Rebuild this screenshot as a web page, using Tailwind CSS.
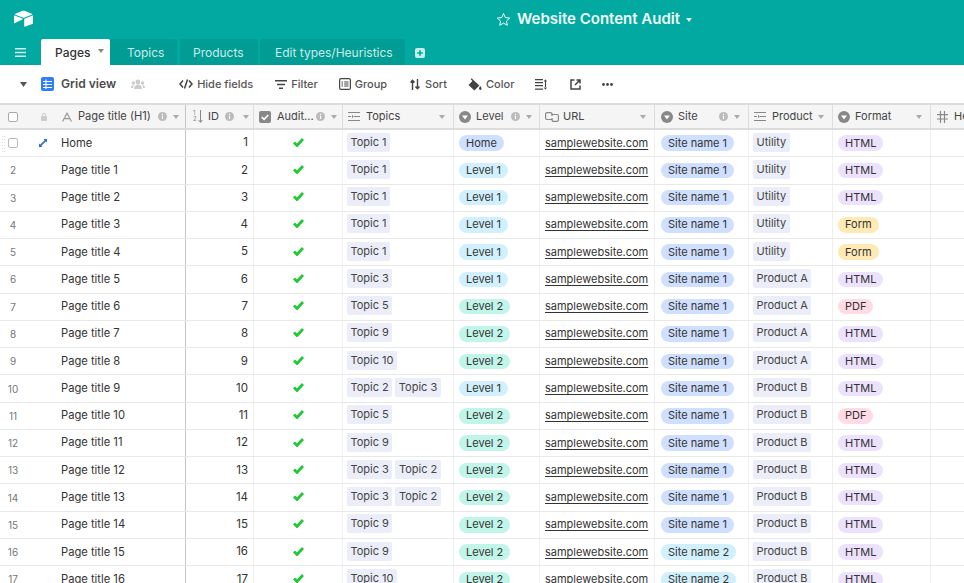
<!doctype html>
<html lang="en">
<head>
<meta charset="utf-8">
<title>Website Content Audit</title>
<script src="https://cdn.jsdelivr.net/npm/@tailwindcss/browser@4"></script>
</head>
<body class="w-[964px] h-[583px] overflow-hidden bg-white font-['Inter','Noto_Sans',sans-serif] text-[#333] antialiased">
<header class="h-[65px] bg-[#01a9a0] flex flex-col">
  <div class="h-[39px] flex items-center text-white relative">
    <svg class="ml-[14px] w-[19px] h-[17px] -mt-[2px]" viewBox="0 0 200 170" fill="#fff"><path d="M90 4.4L14.2 35.7c-4.2 1.7-4.2 7.7.1 9.4l76.1 30.2c6.7 2.7 14.1 2.7 20.8 0l76.1-30.2c4.2-1.7 4.3-7.7.1-9.4L111.6 4.4c-6.9-2.9-14.7-2.9-21.6 0"/><path d="M107.5 91.8v75.4c0 3.6 3.6 6 6.9 4.7l84.8-32.9c1.9-.8 3.2-2.6 3.2-4.7V58.9c0-3.6-3.6-6-6.9-4.7l-84.8 32.9c-2 .8-3.2 2.6-3.2 4.7"/><path d="M87.7 95.7L62.5 107.9l-2.6 1.2L6.8 134.6c-3.4 1.6-7.7-.8-7.7-4.6V59.3c0-1.4.7-2.6 1.7-3.5.4-.4.9-.7 1.3-1 1.3-.8 3.2-1 4.8-.4l80.4 31.9c4.1 1.6 4.4 7.4.4 9.4"/></svg>
    <svg class="ml-[463px] w-[15px] h-[15px]" viewBox="0 0 24 24" fill="none" stroke="#fff" stroke-width="1.5" stroke-linejoin="round"><path d="M12 2.5l2.9 6.4 7 .8-5.2 4.7 1.4 6.9-6.1-3.5-6.1 3.5 1.4-6.9-5.2-4.7 7-.8z"/></svg>
    <span class="ml-[6px] text-[15px] font-semibold text-[#effaf9]">Website Content Audit</span>
    <svg class="ml-[6px] w-[6px] h-[4px]" viewBox="0 0 6 4" fill="#d8f3f1"><path d="M0 0h6L3 4z"/></svg>
  </div>
  <div class="h-[26px] flex items-stretch text-[12px]">
    <div class="w-[41px] flex items-center justify-center">
      <svg class="w-[11px] h-[9px]" viewBox="0 0 11 9" fill="#cdeeec"><path d="M0 0h11v1.6H0zM0 3.7h11v1.6H0zM0 7.4h11V9H0z"/></svg>
    </div>
    <div class="w-[69px] bg-white rounded-t-[2px] flex items-center pl-[14px] pt-[1px] text-[#333] font-medium">Pages
      <svg class="ml-[8px] -mt-[4px] w-[6px] h-[4px]" viewBox="0 0 6 4" fill="#888"><path d="M0 0h6L3 4z"/></svg>
    </div>
    <div class="w-[67px] bg-[#019c94] flex items-center pl-[17px] pt-[1px] text-[#c9ecea] rounded-t-[2px]">Topics</div>
    <div class="ml-[3px] w-[78px] bg-[#019c94] flex items-center pl-[13px] pt-[1px] text-[#c9ecea] rounded-t-[2px]">Products</div>
    <div class="ml-[2px] w-[145px] bg-[#019c94] flex items-center pl-[15px] pt-[1px] text-[#c9ecea] rounded-t-[2px]">Edit types/Heuristics</div>
    <div class="ml-[10px] flex items-center pt-[1px]">
      <svg class="w-[10px] h-[10px]" viewBox="0 0 10 10"><rect width="10" height="10" rx="2" fill="#c6efec"/><path d="M5 2.2v5.6M2.2 5h5.6" stroke="#01a9a0" stroke-width="1.6"/></svg>
    </div>
  </div>
</header>

<div class="h-[38px] flex items-center text-[11px] text-[#555] font-medium">
  <svg class="ml-[20px] w-[7px] h-[5px]" viewBox="0 0 7 5" fill="#555"><path d="M0 0h7L3.5 5z"/></svg>
  <svg class="ml-[14px] w-[13px] h-[14px]" viewBox="0 0 13 14"><rect width="13" height="14" rx="2" fill="#2d7ff9"/><path d="M2 4.500h9M2 7.500h9M2 10.500h9M5 2.500v9.500" stroke="#fff" stroke-width="1.1"/></svg>
  <span class="ml-[7px] text-[12.1px] font-semibold text-[#4d4d4d]">Grid view</span>
  <svg class="ml-[15px] w-[14px] h-[10px]" viewBox="0 0 14 10" fill="#ccc"><circle cx="7" cy="3" r="2.4"/><circle cx="2.4" cy="4" r="1.7"/><circle cx="11.6" cy="4" r="1.7"/><path d="M3 10c0-3 1.6-4.5 4-4.5S11 7 11 10zM0 9c0-2 1-3 2.6-3L2 9zM14 9c0-2-1-3-2.6-3l.6 3z"/></svg>
  <svg class="ml-[34px] w-[14px] h-[10px]" viewBox="0 0 14 10" fill="none" stroke="#444" stroke-width="1.5"><path d="M4 1.5L1 5l3 3.5M10 1.5L13 5l-3 3.5M8.500 .5L5.500 9.500"/></svg>
  <span class="ml-[4px]">Hide fields</span>
  <svg class="ml-[22px] w-[12px] h-[9px]" viewBox="0 0 12 9" fill="#444"><path d="M0 0h12v1.6H0zM2 3.7h8v1.6H2zM4 7.4h4V9H4z"/></svg>
  <span class="ml-[4px]">Filter</span>
  <svg class="ml-[21px] w-[12px] h-[12px]" viewBox="0 0 12 12" fill="none" stroke="#444" stroke-width="1.2"><rect x=".6" y=".6" width="10.8" height="10.8" rx="1.5"/><path d="M2.500 4h1.500M5.200 4h4.300M2.500 6h1.500M5.200 6h4.300M2.500 8h1.500M5.200 8h4.300"/></svg>
  <span class="ml-[4px]">Group</span>
  <svg class="ml-[23px] w-[10px] h-[11px]" viewBox="0 0 10 11" fill="none" stroke="#444" stroke-width="1.4"><path d="M2.500 11V1.500M.5 3.500l2-2.300 2 2.300M7.500 0v9.500M5.500 7.500l2 2.300 2-2.300"/></svg>
  <span class="ml-[5px]">Sort</span>
  <svg class="ml-[21px] w-[14px] h-[13px]" viewBox="0 0 14 13" fill="#444"><path d="M2.700 1.300l1-1 1.700 1.700 6 5.500-5 5L.5 7l3.900-3.900z"/><path d="M12.300 8c.8 1.200 1.300 1.900 1.300 2.600a1.300 1.300 0 01-2.600 0c0-.7.5-1.400 1.300-2.600z"/></svg>
  <span class="ml-[4px]">Color</span>
  <svg class="ml-[21px] w-[12px] h-[11px]" viewBox="0 0 12 11" fill="#444"><path d="M0 0h8v1.300H0zM0 3h8v1.300H0zM0 6h8v1.300H0zM0 9.500h8v1.300H0zM10 2h1v7h-1zM8.700 2.500l1.800-2.300 1.500 2.300zM8.700 8.500l1.800 2.300L12 8.500z"/></svg>
  <svg class="ml-[23px] w-[11px] h-[11px]" viewBox="0 0 11 11" fill="none" stroke="#444" stroke-width="1.5"><path d="M4.500 1H1v9h9V6.500"/><path d="M5 6l4.500-4.500M6.500 1H10v3.500"/></svg>
  <svg class="ml-[21px] w-[11px] h-[3px]" viewBox="0 0 11 3" fill="#444"><circle cx="1.500" cy="1.500" r="1.400"/><circle cx="5.500" cy="1.500" r="1.400"/><circle cx="9.500" cy="1.500" r="1.400"/></svg>
</div>

<div class="text-[11px] leading-none">
  <div class="h-[27px] bg-[#f5f5f5] border-t-2 border-b-2 border-[#dcdcdc] grid grid-cols-[186px_68px_89px_111px_86px_115px_94px_84px_98px_33px] text-[#444] [&>div]:border-r [&>div]:border-[#dedede] [&>div]:flex [&>div]:items-center">
    <div class="!border-[#c4c4c4] pl-[8px]">
      <span class="w-[10px] h-[10px] rounded-[2px] border border-[#aaa] bg-white"></span>
      <svg class="ml-[23px] w-[6px] h-[8px]" viewBox="0 0 6 8" fill="#ccc"><rect y="3" width="6" height="5" rx="1"/><path d="M1.300 3.500V2a1.700 1.700 0 013.400 0v1.500" fill="none" stroke="#ccc"/></svg>
      <svg class="ml-[15px] w-[10px] h-[10px]" viewBox="0 0 11 10" fill="none" stroke="#999" stroke-width="1.300"><path d="M.6 10L5.500.8 10.400 10M2.200 6.800h6.600"/></svg>
      <span class="ml-[6px] whitespace-nowrap text-[11.1px]">Page title (H1)</span>
      <svg class="ml-[7px] w-[9px] h-[9px]" viewBox="0 0 9 9"><circle cx="4.500" cy="4.500" r="4.500" fill="#bbb"/><path d="M4.500 3.700v3.200M4.500 1.700v1.200" stroke="#fff" stroke-width="1.200"/></svg>
      <svg class="ml-[6px] w-[6px] h-[4px]" viewBox="0 0 6 4" fill="#aaa"><path d="M0 0h6L3 4z"/></svg>
    </div>
    <div class="pl-[7px]">
      <span class="w-[5px] h-[14px] text-[6px] leading-[6.500px] text-[#888] flex flex-col"><span>1</span><span>2</span></span>
      <svg class="w-[5px] h-[13px]" viewBox="0 0 5 13" fill="none" stroke="#888" stroke-width="1"><path d="M2.500 0v12M.5 10l2 2.400 2-2.400"/></svg>
      <span class="ml-[5px]">ID</span>
      <svg class="ml-[6px] w-[9px] h-[9px]" viewBox="0 0 9 9"><circle cx="4.500" cy="4.500" r="4.500" fill="#bbb"/><path d="M4.500 3.700v3.200M4.500 1.700v1.200" stroke="#fff" stroke-width="1.200"/></svg>
      <svg class="ml-[9px] w-[6px] h-[4px]" viewBox="0 0 6 4" fill="#aaa"><path d="M0 0h6L3 4z"/></svg>
    </div>
    <div class="pl-[5px]">
      <svg class="w-[12px] h-[12px]" viewBox="0 0 12 12"><rect width="12" height="12" rx="2" fill="#888"/><path d="M2.800 6.200l2.300 2.200 4.200-4.400" fill="none" stroke="#fff" stroke-width="1.600"/></svg>
      <span class="ml-[6px]">Audit...</span>
      <svg class="ml-[2px] w-[9px] h-[9px]" viewBox="0 0 9 9"><circle cx="4.500" cy="4.500" r="4.500" fill="#bbb"/><path d="M4.500 3.700v3.200M4.500 1.700v1.200" stroke="#fff" stroke-width="1.200"/></svg>
      <svg class="ml-[6px] w-[6px] h-[4px]" viewBox="0 0 6 4" fill="#aaa"><path d="M0 0h6L3 4z"/></svg>
    </div>
    <div class="pl-[5px]">
      <svg class="w-[12px] h-[9px]" viewBox="0 0 12 9" fill="#888"><path d="M0 0h12v1.100H0zM6 3.900h6V5H6zM0 3.900h3V5H0zM0 7.900h12V9H0zM4 2.800l1.800 1.700L4 6.200z"/></svg>
      <span class="ml-[6px]">Topics</span>
      <svg class="ml-auto mr-[8px] w-[6px] h-[4px]" viewBox="0 0 6 4" fill="#aaa"><path d="M0 0h6L3 4z"/></svg>
    </div>
    <div class="pl-[5px]">
      <svg class="w-[12px] h-[12px]" viewBox="0 0 12 12"><circle cx="6" cy="6" r="6" fill="#888"/><path d="M3 4.500h6L6 8.500z" fill="#fff"/></svg>
      <span class="ml-[5px]">Level</span>
      <svg class="ml-[8px] w-[9px] h-[9px]" viewBox="0 0 9 9"><circle cx="4.500" cy="4.500" r="4.500" fill="#bbb"/><path d="M4.500 3.700v3.200M4.500 1.700v1.200" stroke="#fff" stroke-width="1.200"/></svg>
      <svg class="ml-[6px] w-[6px] h-[4px]" viewBox="0 0 6 4" fill="#aaa"><path d="M0 0h6L3 4z"/></svg>
    </div>
    <div class="pl-[5px]">
      <svg class="w-[14px] h-[10px]" viewBox="0 0 14 10" fill="none" stroke="#888" stroke-width="1.200"><path d="M7.500 7.500H2a1.400 1.400 0 01-1.400-1.400V2A1.400 1.400 0 012 .6h3.500A1.400 1.400 0 017 2v2"/><path d="M6.500 2.500H12a1.400 1.400 0 011.400 1.400V8A1.400 1.400 0 0112 9.400H8.500A1.400 1.400 0 017 8V6"/></svg>
      <span class="ml-[4px]">URL</span>
      <svg class="ml-auto mr-[8px] w-[6px] h-[4px]" viewBox="0 0 6 4" fill="#aaa"><path d="M0 0h6L3 4z"/></svg>
    </div>
    <div class="pl-[6px]">
      <svg class="w-[12px] h-[12px]" viewBox="0 0 12 12"><circle cx="6" cy="6" r="6" fill="#888"/><path d="M3 4.500h6L6 8.500z" fill="#fff"/></svg>
      <span class="ml-[5px]">Site</span>
      <svg class="ml-auto w-[9px] h-[9px]" viewBox="0 0 9 9"><circle cx="4.500" cy="4.500" r="4.500" fill="#bbb"/><path d="M4.500 3.700v3.200M4.500 1.700v1.200" stroke="#fff" stroke-width="1.200"/></svg>
      <svg class="ml-[6px] mr-[8px] w-[6px] h-[4px]" viewBox="0 0 6 4" fill="#aaa"><path d="M0 0h6L3 4z"/></svg>
    </div>
    <div class="pl-[5px]">
      <svg class="w-[12px] h-[9px]" viewBox="0 0 12 9" fill="#888"><path d="M0 0h12v1.100H0zM6 3.900h6V5H6zM0 3.900h3V5H0zM0 7.900h12V9H0zM4 2.800l1.800 1.700L4 6.200z"/></svg>
      <span class="ml-[6px]">Product</span>
      <svg class="ml-auto mr-[8px] w-[6px] h-[4px]" viewBox="0 0 6 4" fill="#aaa"><path d="M0 0h6L3 4z"/></svg>
    </div>
    <div class="pl-[5px]">
      <svg class="w-[12px] h-[12px]" viewBox="0 0 12 12"><circle cx="6" cy="6" r="6" fill="#888"/><path d="M3 4.500h6L6 8.500z" fill="#fff"/></svg>
      <span class="ml-[5px]">Format</span>
      <svg class="ml-auto mr-[8px] w-[6px] h-[4px]" viewBox="0 0 6 4" fill="#aaa"><path d="M0 0h6L3 4z"/></svg>
    </div>
    <div class="pl-[6px] !border-r-0 overflow-hidden">
      <svg class="shrink-0 w-[11px] h-[12px]" viewBox="0 0 11 12" fill="none" stroke="#888" stroke-width="1.200"><path d="M3.500 0v12M7.500 0v12M0 3.700h11M0 8h11"/></svg>
      <span class="ml-[6px]">He</span>
    </div>
  </div>
  <div id="rows"></div>
</div>

<script>
const chip = "inline-flex items-center h-[19px] -mt-[2px] px-[3.5px] rounded-[2px] bg-[#ebeef8] text-[#444] whitespace-nowrap";
const pill = "inline-flex items-center h-[15.5px] px-[7px] rounded-full whitespace-nowrap text-[#333]";
const colors = {
  Home: "bg-[#cfdfff]", "Level 1": "bg-[#d0f0fd]", "Level 2": "bg-[#c2f5e9]",
  "Site name 1": "bg-[#cfdfff]", "Site name 2": "bg-[#d0f0fd]",
  HTML: "bg-[#ede2fe]", Form: "bg-[#ffeab6]", PDF: "bg-[#ffdce5]"
};
const U = "Utility", A = "Product A", B = "Product B";
const data = [
 ["Home",1,["Topic 1"],"Home","Site name 1",U,"HTML"],
 ["Page title 1",2,["Topic 1"],"Level 1","Site name 1",U,"HTML"],
 ["Page title 2",3,["Topic 1"],"Level 1","Site name 1",U,"HTML"],
 ["Page title 3",4,["Topic 1"],"Level 1","Site name 1",U,"Form"],
 ["Page title 4",5,["Topic 1"],"Level 1","Site name 1",U,"Form"],
 ["Page title 5",6,["Topic 3"],"Level 1","Site name 1",A,"HTML"],
 ["Page title 6",7,["Topic 5"],"Level 2","Site name 1",A,"PDF"],
 ["Page title 7",8,["Topic 9"],"Level 2","Site name 1",A,"HTML"],
 ["Page title 8",9,["Topic 10"],"Level 2","Site name 1",A,"HTML"],
 ["Page title 9",10,["Topic 2","Topic 3"],"Level 1","Site name 1",B,"HTML"],
 ["Page title 10",11,["Topic 5"],"Level 2","Site name 1",B,"PDF"],
 ["Page title 11",12,["Topic 9"],"Level 2","Site name 1",B,"HTML"],
 ["Page title 12",13,["Topic 3","Topic 2"],"Level 2","Site name 1",B,"HTML"],
 ["Page title 13",14,["Topic 3","Topic 2"],"Level 2","Site name 1",B,"HTML"],
 ["Page title 14",15,["Topic 9"],"Level 2","Site name 1",B,"HTML"],
 ["Page title 15",16,["Topic 9"],"Level 2","Site name 2",B,"HTML"],
 ["Page title 16",17,["Topic 10"],"Level 2","Site name 2",B,"HTML"]
];
const rowEl = document.getElementById("rows");
rowEl.innerHTML = data.map((r,i) => {
  const lead = i === 0
    ? `<span class="relative w-[10px] h-[10px] rounded-[2px] border border-[#bbb] bg-white -mt-[1px]"><span class="absolute -left-[8px] -top-[4px] w-[5px] h-[18px] bg-[radial-gradient(#ccc_0.7px,transparent_0.8px)] bg-[length:2.500px_3px]"></span></span>
       <svg class="ml-[21px] w-[8px] h-[8px]" viewBox="0 0 9 9" fill="#2d6fd0"><path d="M5 0h4v4L7.600 2.700 2.700 7.600 4 9H0V5l1.400 1.300 4.900-4.900z"/></svg>
       <span class="ml-[14px] text-[11.2px]">${r[0]}</span>`
    : `<span class="w-[10px] text-center text-[10px] text-[#777] whitespace-nowrap flex justify-center">${i+1}</span>
       <span class="ml-[43px] text-[11.2px]">${r[0]}</span>`;
  return `<div class="h-[27.27px] border-b border-[#e8e8e8] grid grid-cols-[186px_68px_89px_111px_86px_115px_94px_84px_98px_33px] items-stretch [&>div]:border-r [&>div]:border-[#f0f0f0] [&>div]:flex [&>div]:items-center">
    <div class="!border-[#c4c4c4] pl-[8px]">${lead}</div>
    <div class="justify-end pr-[5px] text-[11.5px]">${r[1]}</div>
    <div class="justify-center"><svg class="w-[11px] h-[9px] -mt-[2px]" viewBox="0 0 11 9" fill="none" stroke="#20c933" stroke-width="2.800"><path d="M1 4.500l3 3 6-6.500"/></svg></div>
    <div class="pl-[4px] gap-[3px]">${r[2].map(t => `<span class="${chip}">${t}</span>`).join("")}</div>
    <div class="pl-[5px]"><span class="${pill} ${colors[r[3]]}">${r[3]}</span></div>
    <div class="pl-[5px]"><span class="underline decoration-[1.200px] underline-offset-[2px] [text-decoration-skip-ink:none]">samplewebsite.com</span></div>
    <div class="pl-[6px]"><span class="${pill} ${colors[r[4]]}">${r[4]}</span></div>
    <div class="pl-[4px]"><span class="${chip}">${r[5]}</span></div>
    <div class="pl-[5px]"><span class="${pill} ${colors[r[6]]}">${r[6]}</span></div>
    <div class="!border-r-0"></div>
  </div>`;
}).join("");
</script>
</body>
</html>
